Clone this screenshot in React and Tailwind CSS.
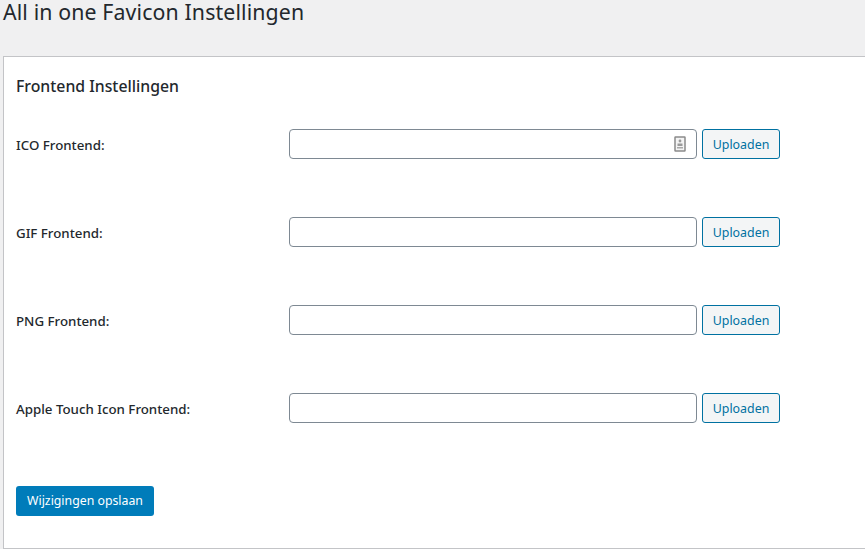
const rows = ["ICO Frontend:", "GIF Frontend:", "PNG Frontend:", "Apple Touch Icon Frontend:"];

function ContactIcon() {
  return (
    <svg width="12" height="16" viewBox="0 0 12 16" className="absolute left-[385px] top-[7px]" fill="none">
      <rect x="1" y="1" width="10" height="14" rx="0.5" stroke="#8a8a8a" strokeWidth="1.5" fill="#f4f4f4" />
      <circle cx="6" cy="5" r="1.4" fill="#9a9a9a" />
      <rect x="3.5" y="7.5" width="5" height="2.5" fill="#9a9a9a" />
      <rect x="3" y="11" width="6" height="1.5" fill="#a8a8a8" />
    </svg>
  );
}

export default function App() {
  return (
    <div className="h-[549px] w-[865px] overflow-hidden bg-[#f0f0f1] font-['Noto_Sans',sans-serif] text-[#23282d]">
      <h1 className="h-[56px] pl-[3px] text-[21.3px] leading-[24px] font-normal tracking-[0.13px]">All in one Favicon Instellingen</h1>
      <div className="ml-[3px] h-[493px] w-[880px] border border-[#c3c4c7] bg-white pl-[12px] pt-[19px]">
        <h2 className="h-[20px] text-[15.8px] leading-[20px] font-medium">Frontend Instellingen</h2>
        <div className="mt-[33px] flex flex-col gap-[58px]">
          {rows.map((label, i) => (
            <div key={label} className="flex h-[30px] items-center">
              <label className="w-[273px] pt-[2px] text-[13.3px] font-medium leading-[30px]">{label}</label>
              <div className="relative">
                <input className="block h-[30px] w-[408px] rounded-[4px] border border-[#7e8993] bg-white" />
                {i === 0 && <ContactIcon />}
              </div>
              <button className="ml-[5px] h-[30px] w-[78px] rounded-[3px] border border-[#0071a1] bg-[#f3f5f6] pt-[2px] text-center text-[12.4px] text-[#0071a1]">Uploaden</button>
            </div>
          ))}
        </div>
        <button className="mt-[63px] block h-[30px] w-[138px] rounded-[3px] bg-[#007cba] text-center text-[12.3px] text-white">Wijzigingen opslaan</button>
      </div>
    </div>
  );
}
